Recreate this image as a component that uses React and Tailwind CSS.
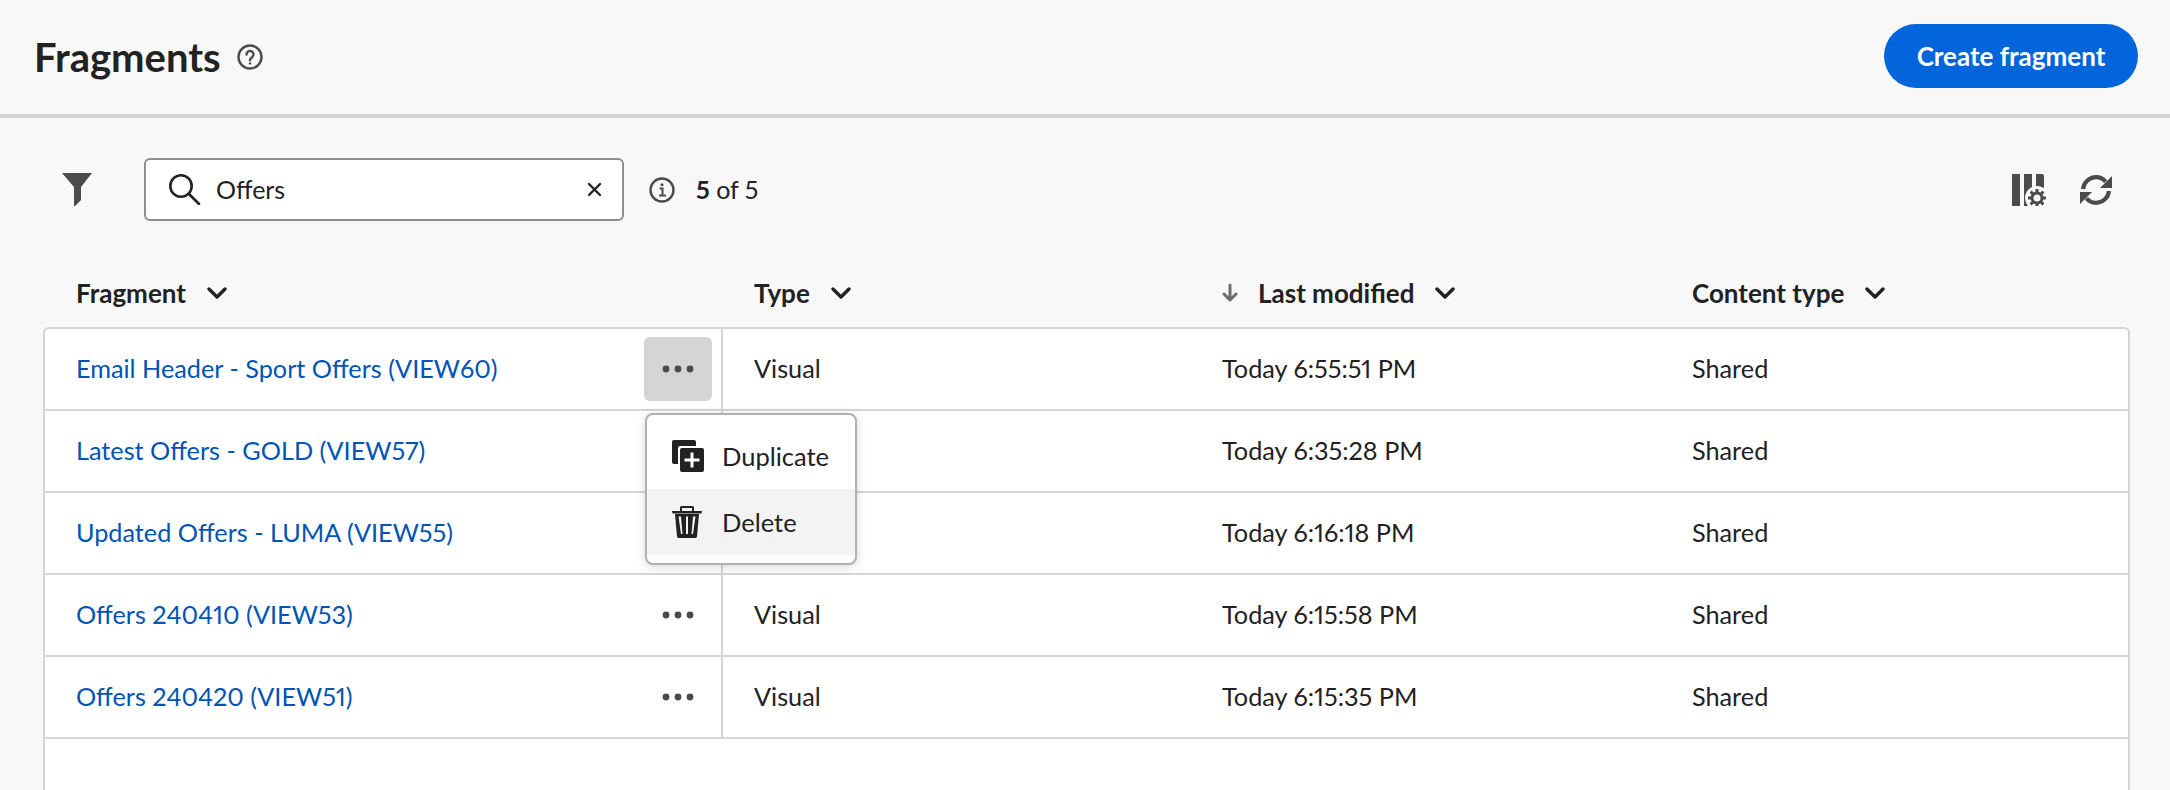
const rows = [
  { name: "Email Header - Sport Offers (VIEW60)", type: "Visual", time: "Today 6:55:51 PM", actions: "active" },
  // the open menu covers the type cell and the actions of these two rows
  { name: "Latest Offers - GOLD (VIEW57)", time: "Today 6:35:28 PM" },
  { name: "Updated Offers - LUMA (VIEW55)", time: "Today 6:16:18 PM" },
  { name: "Offers 240410 (VIEW53)", type: "Visual", time: "Today 6:15:58 PM", actions: "idle" },
  { name: "Offers 240420 (VIEW51)", type: "Visual", time: "Today 6:15:35 PM", actions: "idle" },
];

const Chevron = () => (
  <svg width="20" height="12" viewBox="0 0 20 12" fill="none" stroke="#222" strokeWidth="3.4" strokeLinecap="round" strokeLinejoin="round">
    <polyline points="2 2 10 10 18 2" />
  </svg>
);

const Dots = () => (
  <svg width="32" height="8" viewBox="0 0 32 8" fill="#4b4b4b">
    <circle cx="4" cy="4" r="3.4" />
    <circle cx="16" cy="4" r="3.4" />
    <circle cx="28" cy="4" r="3.4" />
  </svg>
);

const HeadCell = ({ children, arrow }) => (
  <div className="pl-[31px] flex items-center font-bold text-[26px] text-[#222]">
    {arrow && (
      <svg className="mr-[20px]" width="16" height="20" viewBox="0 0 16 20" fill="none" stroke="#6d6d6d" strokeWidth="3" strokeLinecap="round" strokeLinejoin="round">
        <path d="M8 2v15M2 11l6 6 6-6" />
      </svg>
    )}
    <span className="mr-[21px]">{children}</span>
    <Chevron />
  </div>
);

export default function App() {
  return (
    <div className="h-[790px] overflow-hidden bg-[#f8f8f8] flex flex-col font-['Lato','Noto_Sans',sans-serif] proportional-nums text-[#222]">
      {/* Page header */}
      <header className="h-[118px] shrink-0 border-b-4 border-[#d5d5d5] flex items-center justify-between pl-[34px] pr-[32px]">
        <div className="flex items-center gap-[16px]">
          <h1 className="text-[40px] font-bold leading-none">Fragments</h1>
          <svg width="26" height="26" viewBox="0 0 26 26" fill="none" stroke="#4b4b4b" strokeWidth="2.4">
            <circle cx="13" cy="13" r="11.5" />
            <path d="M9.5 10.5a3.5 3.5 0 1 1 5.5 2.8c-1.2.9-2 1.4-2 2.9" strokeLinecap="round" />
            <circle cx="13" cy="19.4" r="1.2" fill="#4b4b4b" stroke="none" />
          </svg>
        </div>
        <button className="mb-[2px] h-[64px] w-[254px] rounded-full bg-[#0265dc] text-white text-[26px] font-bold">
          Create fragment
        </button>
      </header>

      {/* Toolbar */}
      <div className="h-[63px] mt-[40px] shrink-0 flex items-center pl-[62px] pr-[58px]">
        <svg width="30" height="33" viewBox="0 0 30 33" fill="#4b4b4b">
          <path d="M0 0h30L19 14v13l-6 6h-1V14z" />
        </svg>
        <div className="ml-[52px] w-[480px] h-[63px] bg-white border-2 border-[#8e8e8e] rounded-[6px] flex items-center pl-[23px] pr-[20px]">
          <svg width="32" height="31" viewBox="0 0 32 31" fill="none" stroke="#222" strokeWidth="2.6" strokeLinecap="round">
            <circle cx="12" cy="12" r="10.7" />
            <path d="M20 20l10 10" />
          </svg>
          <span className="ml-[15px] text-[25px] flex-1">Offers</span>
          <svg width="15" height="15" viewBox="0 0 15 15" fill="none" stroke="#222" strokeWidth="2.4" strokeLinecap="round">
            <path d="M2 2l11 11M13 2L2 13" />
          </svg>
        </div>
        <svg className="ml-[25px]" width="26" height="26" viewBox="0 0 26 26" fill="none" stroke="#4b4b4b" strokeWidth="2.4">
          <circle cx="13" cy="13" r="11.5" />
          <circle cx="13" cy="7.8" r="1.5" fill="#4b4b4b" stroke="none" />
          <path d="M10.5 11.5H13.5V18M10 18.5h7" strokeWidth="2" />
        </svg>
        <div className="ml-[21px] text-[25px]">
          <span className="font-bold">5</span> of 5
        </div>
        <div className="ml-auto flex items-center gap-[34px]">
          <svg width="34" height="32" viewBox="0 0 34 32" fill="#4b4b4b">
            <rect x="0" y="0" width="8" height="32" />
            <rect x="12" y="0" width="8" height="32" />
            <path d="M24 0h6a2 2 0 0 1 2 2v24h-8z" />
            <circle cx="25" cy="24" r="12" fill="#f8f8f8" />
            <circle cx="25" cy="24" r="5" fill="none" stroke="#4b4b4b" strokeWidth="3" />
            <path d="M25 15v4M25 29v4M16 24h4M30 24h4M18.6 17.6l2.9 2.9M28.5 27.5l2.9 2.9M18.6 30.4l2.9-2.9M28.5 20.5l2.9-2.9" stroke="#4b4b4b" strokeWidth="3" />
          </svg>
          <svg width="32" height="30" viewBox="0 0 32 30" fill="none">
            <path d="M3 14C3.8 7 9.5 2.2 16 2.2c3.8 0 7.2 1.6 9.6 4.4" stroke="#4b4b4b" strokeWidth="4.2" />
            <path d="M32 1v12H20z" fill="#4b4b4b" />
            <path d="M29 16c-.8 7-6.5 11.8-13 11.8-3.8 0-7.2-1.6-9.6-4.4" stroke="#4b4b4b" strokeWidth="4.2" />
            <path d="M0 29V17h12z" fill="#4b4b4b" />
          </svg>
        </div>
      </div>

      {/* Column headers */}
      <div className="h-[106px] shrink-0 pt-[38px] pl-[45px] pr-[40px] grid grid-cols-[678px_468px_470px_1fr] items-center">
        <HeadCell>Fragment</HeadCell>
        <HeadCell>Type</HeadCell>
        <HeadCell arrow>Last modified</HeadCell>
        <HeadCell>Content type</HeadCell>
      </div>

      {/* Table */}
      <div className="relative flex-1 ml-[43px] mr-[40px] bg-white border-2 border-b-0 border-[#d5d5d5] rounded-t-[6px] text-[25.25px]">
        {rows.map((row) => (
          <div key={row.name} className="h-[82px] border-b-2 border-[#d5d5d5] grid grid-cols-[678px_468px_470px_1fr] items-stretch">
            <div className="relative border-r-2 border-[#d5d5d5] flex items-center justify-between pl-[31px] pr-[9px]">
              <a className="text-[#0054b6]">{row.name}</a>
              {row.actions === "active" && (
                <button className="w-[68px] h-[64px] rounded-[6px] bg-[#d5d5d5] flex items-center justify-center">
                  <Dots />
                </button>
              )}
              {row.actions === "idle" && (
                <button className="w-[68px] h-[64px] flex items-center justify-center">
                  <Dots />
                </button>
              )}
            </div>
            <div className="pl-[31px] flex items-center">{row.type}</div>
            <div className="pl-[31px] flex items-center">{row.time}</div>
            <div className="pl-[31px] flex items-center">Shared</div>
          </div>
        ))}

        {/* Row actions menu */}
        <div className="absolute left-[600px] top-[84px] w-[212px] h-[152px] bg-white border-2 border-[#b1b1b1] rounded-[8px] shadow-[0_2px_10px_rgba(0,0,0,0.16)] pt-[8px] overflow-hidden text-[25.5px]">
          <div className="h-[66px] flex items-center pl-[25px]">
            <svg width="32" height="32" viewBox="0 0 32 32" fill="#222">
              <path d="M2 0h20a2 2 0 0 1 2 2v4H8a2 2 0 0 0-2 2v16H2a2 2 0 0 1-2-2V2a2 2 0 0 1 2-2z" />
              <path fillRule="evenodd" d="M10 8h20a2 2 0 0 1 2 2v20a2 2 0 0 1-2 2H10a2 2 0 0 1-2-2V10a2 2 0 0 1 2-2zm8.5 4.5v6h-6v3h6v6h3v-6h6v-3h-6v-6z" />
            </svg>
            <span className="ml-[18px]">Duplicate</span>
          </div>
          <div className="h-[66px] bg-[#f3f3f3] flex items-center pl-[25px]">
            <svg width="30" height="32" viewBox="0 0 30 32" fill="#222">
              <path d="M8 1.5A1.5 1.5 0 0 1 9.5 0h11A1.5 1.5 0 0 1 22 1.5V5h-2V2H10v3H8z" />
              <path d="M0 5h30l-.6 2.4H.6z" />
              <path fillRule="evenodd" d="M3 8h24l-2 22.5a1.6 1.6 0 0 1-1.6 1.5H6.6A1.6 1.6 0 0 1 5 30.5zm3.5 2.5L9 28h1.5L9 10.5zm7.5 0V28h2V10.5zm7 0L19.5 28H21l2.5-17.5z" />
            </svg>
            <span className="ml-[20px]">Delete</span>
          </div>
        </div>
      </div>
    </div>
  );
}
